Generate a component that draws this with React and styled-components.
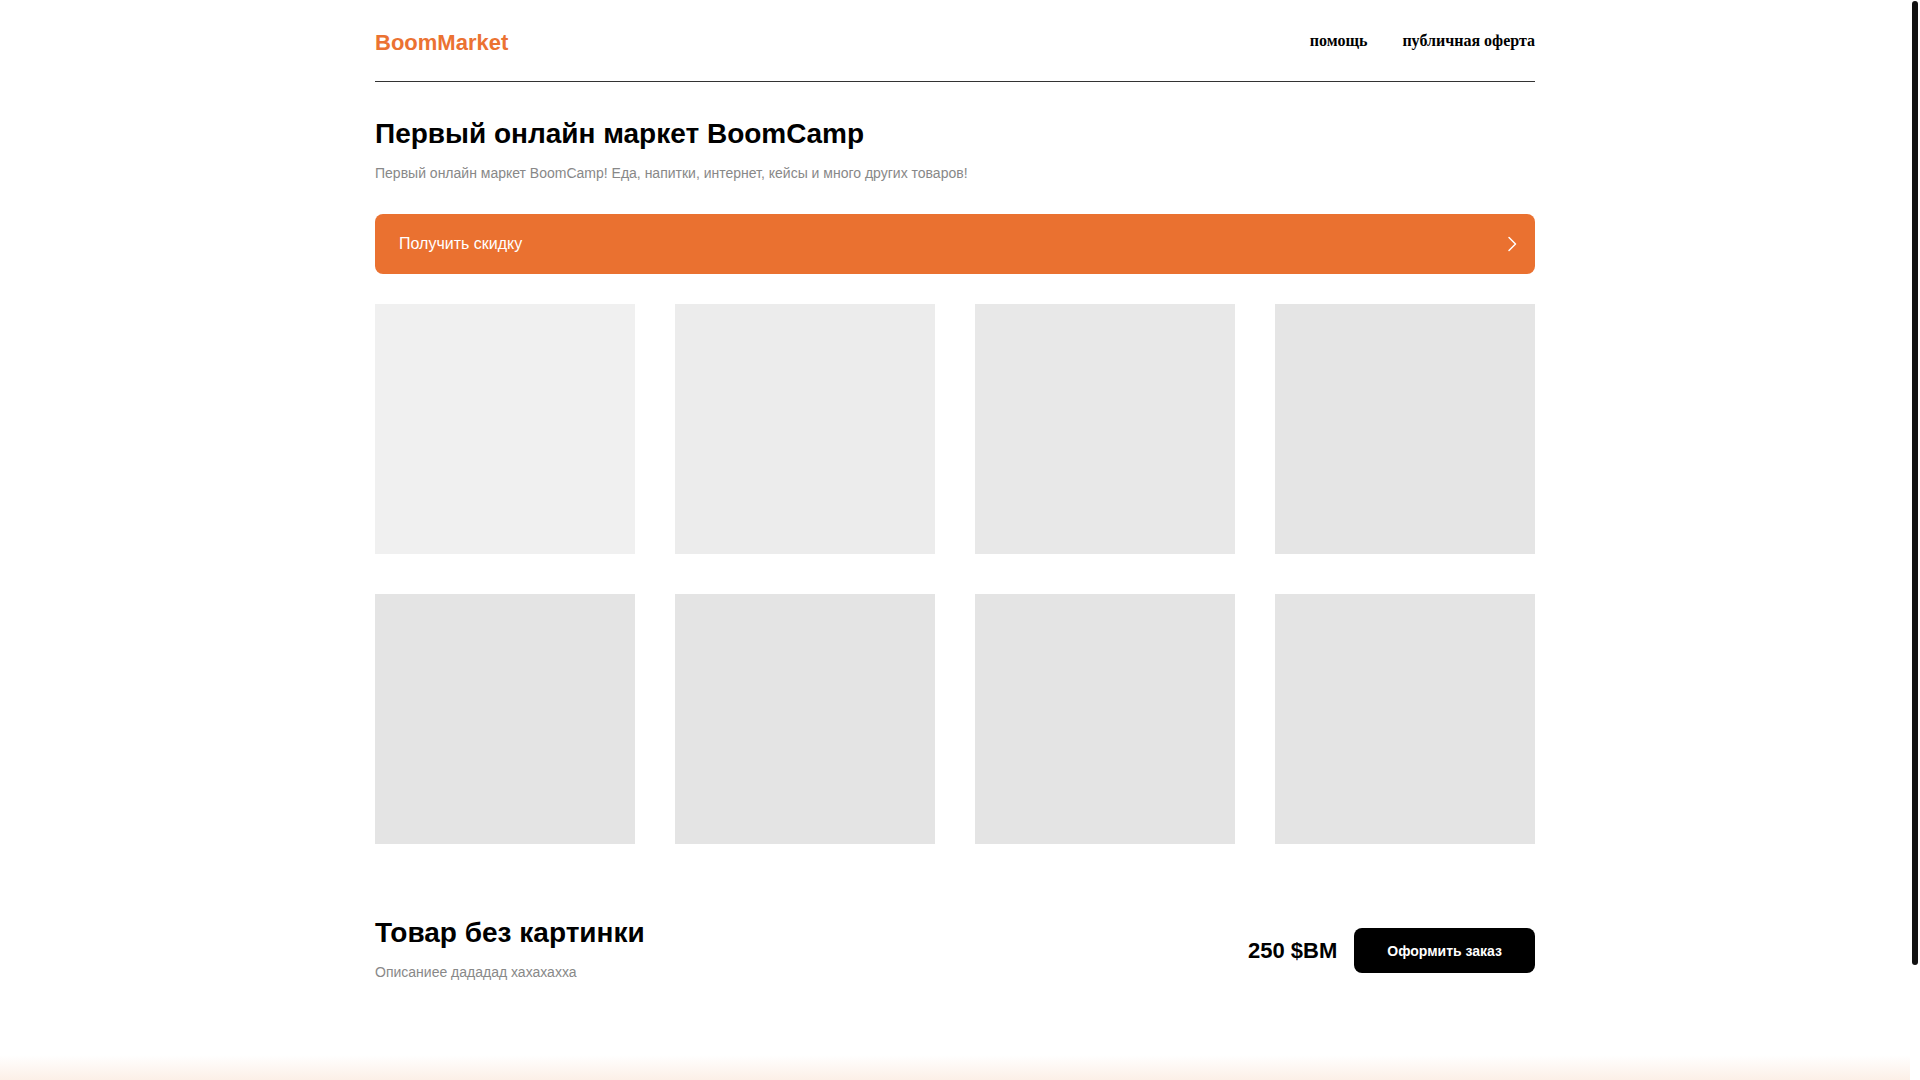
import styled, { createGlobalStyle } from "styled-components";

const GlobalStyle = createGlobalStyle`
  html, body {
    margin: 0;
    padding: 0;
    background: #fff;
  }

  body {
    font-family: "Liberation Sans", Arial, sans-serif;
    color: #000;
  }
`;

// leaves room for the scroll rail on the right, like a visible scrollbar
const Page = styled.div`
  display: flex;
  flex-flow: column nowrap;
  margin-right: 10px;
`;

const ScrollThumb = styled.div`
  position: fixed;
  top: 1px;
  right: 2px;
  width: 6px;
  height: 964px;
  border-radius: 3px;
  background: #111;
`;

const Container = styled.main`
  width: 1160px;
  margin: 0 auto;
`;

const Header = styled.header`
  display: flex;
  justify-content: space-between;
  align-items: flex-start;
  box-sizing: border-box;
  height: 82px;
  padding-top: 30px;
  border-bottom: 1px solid #333;
`;

const Logo = styled.a`
  font-size: 22px;
  line-height: 25px;
  font-weight: 700;
  color: #eb7232;
  text-decoration: none;
`;

const Nav = styled.nav`
  display: flex;
  gap: 35px;
  padding-top: 2px;
`;

const NavLink = styled.a`
  font-family: "Liberation Serif", "Times New Roman", serif;
  font-size: 16px;
  font-weight: 700;
  color: #000;
  text-decoration: none;
`;

const Title = styled.h1`
  margin: ${({ $top }) => $top}px 0 0;
  font-size: 28px;
  font-weight: 700;
`;

const Subtitle = styled.p`
  margin: 15px 0 0;
  font-size: 14px;
  color: #888;
`;

const PromoBanner = styled.a`
  display: flex;
  justify-content: space-between;
  align-items: center;
  height: 60px;
  margin: 33px 0 30px;
  padding: 0 18px 0 24px;
  box-sizing: border-box;
  border-radius: 8px;
  background: #ea7130;
  color: #fff;
  font-size: 16px;
  text-decoration: none;
  cursor: pointer;
`;

//Skeleton cards
const CardGrid = styled.div`
  display: grid;
  grid-template-columns: repeat(4, 260px);
  grid-auto-rows: 250px;
  gap: 40px;
`;

const Card = styled.div`
  background: ${({ $tone }) => $tone};
`;

const Product = styled.section`
  display: flex;
  justify-content: space-between;
  align-items: center;
  margin: 73px 0 75px;
`;

const ProductInfo = styled.div`
  display: flex;
  flex-flow: column nowrap;
`;

const Order = styled.div`
  display: flex;
  align-items: center;
  gap: 17px;
  margin-top: 4px;
`;

const Price = styled.span`
  font-size: 22px;
  font-weight: 700;
`;

const OrderButton = styled.button`
  height: 45px;
  padding: 0 33px;
  border: none;
  border-radius: 8px;
  background: #000;
  color: #fff;
  font-family: "Liberation Sans", Arial, sans-serif;
  font-size: 14px;
  font-weight: 700;
  cursor: pointer;
`;

const Footer = styled.footer`
  height: 153px;
  background: linear-gradient(to bottom, #fff 0, #fcefe6 26px, #fcefe6 100%);
`;

const tones = [
  "#f0f0f0",
  "#ececec",
  "#e8e8e8",
  "#e5e5e5",
  "#e4e4e4",
  "#e4e4e4",
  "#e4e4e4",
  "#e4e4e4",
];

const App = () => {
  return (
    <Page>
      <GlobalStyle />
      <Container>
        <Header>
          <Logo>BoomMarket</Logo>
          <Nav>
            <NavLink>помощь</NavLink>
            <NavLink>публичная оферта</NavLink>
          </Nav>
        </Header>

        <Title $top={36}>Первый онлайн маркет BoomCamp</Title>
        <Subtitle>
          Первый онлайн маркет BoomCamp! Еда, напитки, интернет, кейсы и много
          других товаров!
        </Subtitle>

        <PromoBanner>
          <span>Получить скидку</span>
          <svg width="10" height="16" viewBox="0 0 10 16" fill="none">
            <path
              d="M2 1.5 L8.5 8 L2 14.5"
              stroke="#fff"
              strokeWidth="1.5"
              strokeLinecap="round"
              strokeLinejoin="round"
            />
          </svg>
        </PromoBanner>

        <CardGrid>
          {tones.map((tone, i) => (
            <Card key={i} $tone={tone} />
          ))}
        </CardGrid>

        <Product>
          <ProductInfo>
            <Title $top={0}>Товар без картинки</Title>
            <Subtitle>Описаниее дададад хахахахха</Subtitle>
          </ProductInfo>
          <Order>
            <Price>250 $BM</Price>
            <OrderButton>Оформить заказ</OrderButton>
          </Order>
        </Product>
      </Container>
      <Footer />
      <ScrollThumb />
    </Page>
  );
};

export default App;
